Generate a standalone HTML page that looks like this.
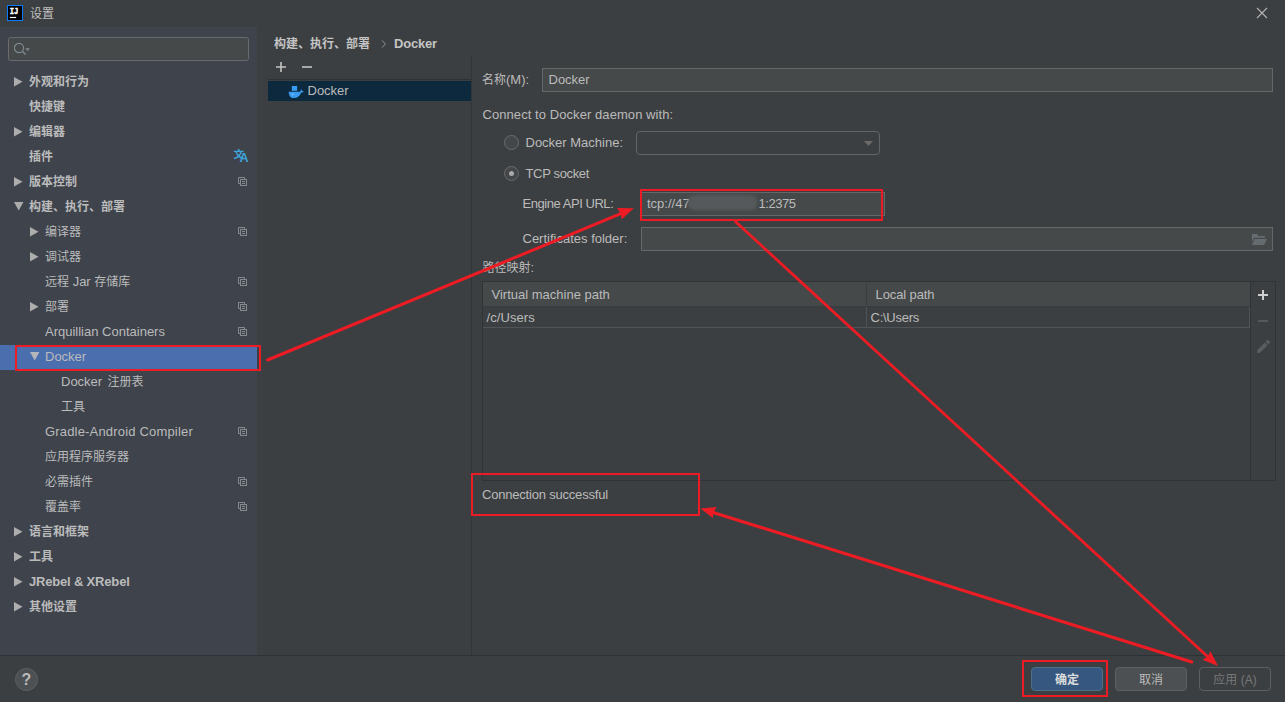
<!DOCTYPE html>
<html lang="zh-CN">
<head>
<meta charset="utf-8">
<title>设置</title>
<style>
html,body{margin:0;padding:0;}
body{width:1285px;height:702px;overflow:hidden;background:#3c3f41;position:relative;
  font-family:"Liberation Sans","Noto Sans CJK SC",sans-serif;font-size:13px;color:#bbbbbb;}
.abs{position:absolute;}
.c{font-size:12px;}
.t{position:absolute;white-space:nowrap;line-height:20px;height:20px;}
#sidebar{left:0;top:27px;width:257px;height:628px;background:#3e434c;}
#footline{left:0;top:655px;width:1285px;height:1px;background:#2f3234;}
.row{position:absolute;left:0;width:257px;height:25px;}
.row.sel{background:#4b6eaf;top:345px !important;}
.row .lbl{position:absolute;top:3px;line-height:20px;white-space:nowrap;}
.row.sel .lbl{top:2px;}
.row.b .lbl{font-weight:bold;}
.arr{position:absolute;fill:#adadad;}
.arr.r{top:7.6px;}
.arr.d{top:7.8px;}
.row.sel .arr.d{top:7.1px;fill:#b2b5ba;}
.cp{position:absolute;left:238px;top:8px;width:10px;height:10px;}
.inp{position:absolute;background:#45494a;border:1px solid #676767;box-sizing:border-box;}
.btn{position:absolute;box-sizing:border-box;height:24px;width:72px;border-radius:4px;text-align:center;line-height:25px;font-size:12px;}
.red{position:absolute;border:2px solid #ed1c24;box-sizing:border-box;}
</style>
</head>
<body>
<!-- title bar -->
<svg class="abs" style="left:7px;top:5px" width="16" height="16" viewBox="0 0 16 16">
  <rect x="0" y="0" width="16" height="16" fill="#087cfa"/>
  <rect x="1" y="1" width="14" height="14" fill="#000"/>
  <rect x="2.9" y="11.9" width="6.2" height="1.2" fill="#fff"/>
  <text x="2.7" y="9" textLength="8.6" lengthAdjust="spacingAndGlyphs" font-family="Liberation Mono, monospace" font-weight="bold" font-size="8.4" fill="#fff" stroke="#fff" stroke-width="0.45">IJ</text>
</svg>
<div class="t c" style="left:30px;top:4px;color:#c0c0c0">设置</div>
<svg class="abs" style="left:1256px;top:7px" width="12" height="12" viewBox="0 0 12 12"><path d="M1 1 L11 11 M11 1 L1 11" stroke="#b4b4b4" stroke-width="1.1" fill="none"/></svg>

<div id="sidebar" class="abs"></div>
<!-- search -->
<div class="inp" style="left:8px;top:37px;width:241px;height:24px;border-color:#696b6c;border-radius:2.5px"></div>
<svg class="abs" style="left:12px;top:41px" width="20" height="16" viewBox="0 0 20 16"><circle cx="7" cy="7" r="4.6" stroke="#7f8b91" stroke-width="1.1" fill="none"/><path d="M10.3 10.3 L13.6 13.6" stroke="#7f8b91" stroke-width="1.4"/><path d="M13.2 7.2 H17.9 L15.55 9.9 Z" fill="#7f8b91"/></svg>

<!-- tree -->
<div class="row b" style="top:69px"><svg class="arr r" style="left:13.8px" width="10" height="10" viewBox="0 0 10 10"><path d="M0 0 L8.5 4.7 L0 9.4 Z"/></svg><span class="lbl" style="left:29px"><span class="c">外观和行为</span></span></div>
<div class="row b" style="top:94px"><span class="lbl" style="left:29px"><span class="c">快捷键</span></span></div>
<div class="row b" style="top:119px"><svg class="arr r" style="left:13.8px" width="10" height="10" viewBox="0 0 10 10"><path d="M0 0 L8.5 4.7 L0 9.4 Z"/></svg><span class="lbl" style="left:29px"><span class="c">编辑器</span></span></div>
<div class="row b" style="top:144px"><span class="lbl" style="left:29px"><span class="c">插件</span></span></div>
<div class="row b" style="top:169px"><svg class="arr r" style="left:13.8px" width="10" height="10" viewBox="0 0 10 10"><path d="M0 0 L8.5 4.7 L0 9.4 Z"/></svg><span class="lbl" style="left:29px"><span class="c">版本控制</span></span><svg class="cp" viewBox="0 0 10 10"><path d="M2.5 6.5 H0.5 V0.5 H6.5 V2.5" fill="none" stroke="#868a8f" stroke-width="1"/><rect x="2.5" y="2.5" width="6" height="6" fill="none" stroke="#868a8f" stroke-width="1"/><rect x="4" y="4" width="3" height="1" fill="#868a8f"/><rect x="4" y="6" width="3" height="1" fill="#868a8f"/></svg></div>
<div class="row b" style="top:194px"><svg class="arr d" style="left:13.8px" width="10" height="10" viewBox="0 0 10 10"><path d="M0 0 H9.4 L4.7 8.5 Z"/></svg><span class="lbl" style="left:29px"><span class="c">构建、执行、部署</span></span></div>
<div class="row" style="top:219px"><svg class="arr r" style="left:29.8px" width="10" height="10" viewBox="0 0 10 10"><path d="M0 0 L8.5 4.7 L0 9.4 Z"/></svg><span class="lbl" style="left:45px"><span class="c">编译器</span></span><svg class="cp" viewBox="0 0 10 10"><path d="M2.5 6.5 H0.5 V0.5 H6.5 V2.5" fill="none" stroke="#868a8f" stroke-width="1"/><rect x="2.5" y="2.5" width="6" height="6" fill="none" stroke="#868a8f" stroke-width="1"/><rect x="4" y="4" width="3" height="1" fill="#868a8f"/><rect x="4" y="6" width="3" height="1" fill="#868a8f"/></svg></div>
<div class="row" style="top:244px"><svg class="arr r" style="left:29.8px" width="10" height="10" viewBox="0 0 10 10"><path d="M0 0 L8.5 4.7 L0 9.4 Z"/></svg><span class="lbl" style="left:45px"><span class="c">调试器</span></span></div>
<div class="row" style="top:269px"><span class="lbl" style="left:45px"><span class="c">远程</span> Jar <span class="c">存储库</span></span><svg class="cp" viewBox="0 0 10 10"><path d="M2.5 6.5 H0.5 V0.5 H6.5 V2.5" fill="none" stroke="#868a8f" stroke-width="1"/><rect x="2.5" y="2.5" width="6" height="6" fill="none" stroke="#868a8f" stroke-width="1"/><rect x="4" y="4" width="3" height="1" fill="#868a8f"/><rect x="4" y="6" width="3" height="1" fill="#868a8f"/></svg></div>
<div class="row" style="top:294px"><svg class="arr r" style="left:29.8px" width="10" height="10" viewBox="0 0 10 10"><path d="M0 0 L8.5 4.7 L0 9.4 Z"/></svg><span class="lbl" style="left:45px"><span class="c">部署</span></span><svg class="cp" viewBox="0 0 10 10"><path d="M2.5 6.5 H0.5 V0.5 H6.5 V2.5" fill="none" stroke="#868a8f" stroke-width="1"/><rect x="2.5" y="2.5" width="6" height="6" fill="none" stroke="#868a8f" stroke-width="1"/><rect x="4" y="4" width="3" height="1" fill="#868a8f"/><rect x="4" y="6" width="3" height="1" fill="#868a8f"/></svg></div>
<div class="row" style="top:319px"><span class="lbl" style="left:45px">Arquillian Containers</span><svg class="cp" viewBox="0 0 10 10"><path d="M2.5 6.5 H0.5 V0.5 H6.5 V2.5" fill="none" stroke="#868a8f" stroke-width="1"/><rect x="2.5" y="2.5" width="6" height="6" fill="none" stroke="#868a8f" stroke-width="1"/><rect x="4" y="4" width="3" height="1" fill="#868a8f"/><rect x="4" y="6" width="3" height="1" fill="#868a8f"/></svg></div>
<div class="row sel" style="top:344px"><svg class="arr d" style="left:30.1px" width="10" height="10" viewBox="0 0 10 10"><path d="M0 0 H9.4 L4.7 8.5 Z"/></svg><span class="lbl" style="left:45px">Docker</span></div>
<div class="row" style="top:369px"><span class="lbl" style="left:61px"><span style="word-spacing:1.8px">Docker <span class="c">注册表</span></span></span></div>
<div class="row" style="top:394px"><span class="lbl" style="left:61px"><span class="c">工具</span></span></div>
<div class="row" style="top:419px"><span class="lbl" style="left:45px"><span style="letter-spacing:0.18px">Gradle-Android Compiler</span></span><svg class="cp" viewBox="0 0 10 10"><path d="M2.5 6.5 H0.5 V0.5 H6.5 V2.5" fill="none" stroke="#868a8f" stroke-width="1"/><rect x="2.5" y="2.5" width="6" height="6" fill="none" stroke="#868a8f" stroke-width="1"/><rect x="4" y="4" width="3" height="1" fill="#868a8f"/><rect x="4" y="6" width="3" height="1" fill="#868a8f"/></svg></div>
<div class="row" style="top:444px"><span class="lbl" style="left:45px"><span class="c">应用程序服务器</span></span></div>
<div class="row" style="top:469px"><span class="lbl" style="left:45px"><span class="c">必需插件</span></span><svg class="cp" viewBox="0 0 10 10"><path d="M2.5 6.5 H0.5 V0.5 H6.5 V2.5" fill="none" stroke="#868a8f" stroke-width="1"/><rect x="2.5" y="2.5" width="6" height="6" fill="none" stroke="#868a8f" stroke-width="1"/><rect x="4" y="4" width="3" height="1" fill="#868a8f"/><rect x="4" y="6" width="3" height="1" fill="#868a8f"/></svg></div>
<div class="row" style="top:494px"><span class="lbl" style="left:45px"><span class="c">覆盖率</span></span><svg class="cp" viewBox="0 0 10 10"><path d="M2.5 6.5 H0.5 V0.5 H6.5 V2.5" fill="none" stroke="#868a8f" stroke-width="1"/><rect x="2.5" y="2.5" width="6" height="6" fill="none" stroke="#868a8f" stroke-width="1"/><rect x="4" y="4" width="3" height="1" fill="#868a8f"/><rect x="4" y="6" width="3" height="1" fill="#868a8f"/></svg></div>
<div class="row b" style="top:519px"><svg class="arr r" style="left:13.8px" width="10" height="10" viewBox="0 0 10 10"><path d="M0 0 L8.5 4.7 L0 9.4 Z"/></svg><span class="lbl" style="left:29px"><span class="c">语言和框架</span></span></div>
<div class="row b" style="top:544px"><svg class="arr r" style="left:13.8px" width="10" height="10" viewBox="0 0 10 10"><path d="M0 0 L8.5 4.7 L0 9.4 Z"/></svg><span class="lbl" style="left:29px"><span class="c">工具</span></span></div>
<div class="row b" style="top:569px"><svg class="arr r" style="left:13.8px" width="10" height="10" viewBox="0 0 10 10"><path d="M0 0 L8.5 4.7 L0 9.4 Z"/></svg><span class="lbl" style="left:29px"><span style="letter-spacing:-0.18px">JRebel &amp; XRebel</span></span></div>
<div class="row b" style="top:594px"><svg class="arr r" style="left:13.8px" width="10" height="10" viewBox="0 0 10 10"><path d="M0 0 L8.5 4.7 L0 9.4 Z"/></svg><span class="lbl" style="left:29px"><span class="c">其他设置</span></span></div>

<!-- translate icon -->
<svg class="abs" style="left:233px;top:148px" width="16" height="16" viewBox="0 0 16 16"><text x="0.6" y="10.2" font-size="10.5" font-weight="bold" fill="#3ea6dc" font-family="Noto Sans CJK SC, sans-serif">文</text><text x="6.4" y="14.2" font-size="12.5" font-weight="bold" fill="#3ea6dc" font-family="Liberation Sans, sans-serif">A</text></svg>

<!-- breadcrumb -->
<div class="t c" style="left:274px;top:34px;font-weight:bold;color:#c4c4c4">构建、执行、部署</div>
<svg class="abs" style="left:380px;top:39px" width="8" height="10" viewBox="0 0 8 10"><path d="M2 1.4 L5.4 5 L2 8.6" stroke="#8e9193" stroke-width="1" fill="none"/></svg>
<div class="t" style="left:394px;top:34px;font-weight:bold;color:#c4c4c4;letter-spacing:-0.2px">Docker</div>

<!-- list panel -->
<svg class="abs" style="left:276px;top:62px" width="40" height="10" viewBox="0 0 40 10"><path d="M0 5 H10 M5 0 V10" stroke="#c4c4c4" stroke-width="1.6" fill="none"/><path d="M26 5 H36" stroke="#c4c4c4" stroke-width="1.6"/></svg>
<div class="abs" style="left:268px;top:79px;width:203px;height:1px;background:#2f3133"></div>
<div class="abs" style="left:268px;top:81px;width:203px;height:20px;background:#0d293e"></div>
<svg class="abs" style="left:288px;top:85px" width="16" height="14" viewBox="0 0 16 14"><rect x="3.8" y="1" width="5.3" height="4.8" fill="#3a9cf0"/><path d="M0.7 6.7 H12.3 C12.9 5.6 12.8 4.8 12.4 4 C13.6 4.6 14 5.4 14.1 6 C14.8 5.9 15.3 6.1 15.6 6.4 C15.1 7.3 14.2 7.6 13.1 7.6 C12 11.2 9.4 13.1 6 13.1 C2.6 13.1 0.7 10.6 0.7 6.7 Z" fill="#3a9cf0"/><circle cx="4.6" cy="9.4" r="0.9" fill="#7cc0f5"/></svg>
<div class="t" style="left:307.5px;top:81px">Docker</div>
<div class="abs" style="left:471px;top:55px;width:1px;height:600px;background:#323537"></div>

<!-- form -->
<div class="t" style="left:482px;top:70px"><span class="c">名称</span>(M):</div>
<div class="inp" style="left:542px;top:68px;width:731px;height:24px"></div>
<div class="t" style="left:548.5px;top:70px">Docker</div>
<div class="t" style="left:482.5px;top:105px;letter-spacing:0.07px">Connect to Docker daemon with:</div>

<div class="abs" style="left:504px;top:135px;width:15px;height:15px;border-radius:50%;box-sizing:border-box;border:1px solid #6b6b6b;background:#43474a"></div>
<div class="t" style="left:525.5px;top:133px">Docker Machine:</div>
<div class="abs" style="left:636px;top:131px;width:244px;height:24px;border:1px solid #646464;border-radius:4px;box-sizing:border-box;background:#3c3f41"></div>
<svg class="abs" style="left:864px;top:141px" width="9" height="5" viewBox="0 0 9 5"><path d="M0 0 H9 L4.5 5 Z" fill="#6a6a6a"/></svg>

<div class="abs" style="left:504px;top:166px;width:15px;height:15px;border-radius:50%;box-sizing:border-box;border:1px solid #6b6b6b;background:#43474a"></div>
<div class="abs" style="left:509px;top:171px;width:5px;height:5px;border-radius:50%;background:#a9a9a9"></div>
<div class="t" style="left:525.5px;top:164px;letter-spacing:-0.35px">TCP socket</div>

<div class="t" style="left:522.5px;top:194px;letter-spacing:-0.45px">Engine API URL:</div>
<div class="inp" style="left:641px;top:192px;width:244px;height:24px"></div>
<div class="t" style="left:647px;top:194px">tcp://47</div><div class="t" style="left:758.5px;top:194px;letter-spacing:-0.45px">1:2375</div>
<div class="abs" style="left:688px;top:195px;width:69px;height:15px;border-radius:6px;background:#55595b;filter:blur(1.4px)"></div>

<div class="t" style="left:522.5px;top:229px">Certificates folder:</div>
<div class="inp" style="left:641px;top:227px;width:632px;height:24px"></div>
<svg class="abs" style="left:1252px;top:234px" width="16" height="12" viewBox="0 0 16 12"><path d="M0 0 H5 L6.5 1.9 H13 V3.8 H2 L0 8 Z" fill="#656c70"/><path d="M2.6 5 H15 L12.1 10.9 H-0.1 Z" fill="#656c70"/></svg>

<div class="t c" style="left:482.5px;top:258px">路径映射<span style="font-size:13px">:</span></div>
<!-- table -->
<div class="abs" style="left:482px;top:281px;width:794px;height:200px;border:1px solid #313335;box-sizing:border-box"></div>
<div class="abs" style="left:483px;top:282px;width:767px;height:24px;background:#45494a"></div>
<div class="abs" style="left:1250px;top:282px;width:1px;height:198px;background:#313335"></div>
<div class="abs" style="left:483px;top:306px;width:767px;height:1px;background:#393c3e"></div>
<div class="abs" style="left:483px;top:327px;width:767px;height:1px;background:#505456"></div>
<div class="abs" style="left:866px;top:284px;width:1px;height:21px;background:#3a3d3f"></div><div class="abs" style="left:866px;top:307px;width:1px;height:20px;background:#4f5355"></div>
<div class="abs" style="left:1249px;top:307px;width:1px;height:21px;background:#505456"></div>
<div class="t" style="left:491.5px;top:285px">Virtual machine path</div>
<div class="t" style="left:875.5px;top:285px;letter-spacing:-0.1px">Local path</div>
<div class="t" style="left:486.5px;top:308px;letter-spacing:0.08px">/c/Users</div>
<div class="t" style="left:870.5px;top:308px;letter-spacing:-0.25px">C:\Users</div>
<svg class="abs" style="left:1257px;top:289px" width="12" height="12" viewBox="0 0 12 12"><path d="M1 6 H11 M6 1 V11" stroke="#cfcfcf" stroke-width="2" fill="none"/></svg>
<svg class="abs" style="left:1257px;top:315px" width="12" height="12" viewBox="0 0 12 12"><path d="M1 6 H11" stroke="#5a5d5f" stroke-width="1.8" fill="none"/></svg>
<svg class="abs" style="left:1256px;top:339px" width="15" height="15" viewBox="0 0 15 15"><path d="M1 14 L1.2 11 L8.8 3.4 L11.6 6.2 L4 13.8 Z M9.6 2.6 L11 1.2 Q11.6 0.6 12.2 1.2 L13.8 2.8 Q14.4 3.4 13.8 4 L12.4 5.4 Z" fill="#5a5d5f"/></svg>

<div class="t" style="left:482px;top:485px;letter-spacing:-0.2px">Connection successful</div>

<!-- footer -->
<div id="footline" class="abs"></div>
<div class="abs" style="left:15px;top:668px;width:23px;height:23px;border-radius:50%;box-sizing:border-box;border:1px solid #5e6163;background:#4c5052;text-align:center;line-height:21px;font-weight:bold;color:#b9b9b9;font-size:16px">?</div>
<div class="btn" style="left:1031px;top:667px;background:#365880;border:1px solid #4c708c;color:#dcdcdc;font-weight:bold">确定</div>
<div class="btn" style="left:1115px;top:667px;background:#4c5052;border:1px solid #5e6060;color:#bbbbbb">取消</div>
<div class="btn" style="left:1199px;top:667px;background:#3c3f41;border:1px solid #5e6060;color:#777777">应用 (A)</div>

<!-- red annotations -->
<div class="red" style="left:15px;top:345px;width:246px;height:26px"></div>
<div class="red" style="left:640px;top:189px;width:243px;height:32px"></div>
<div class="red" style="left:471px;top:473px;width:229px;height:43px"></div>
<div class="red" style="left:1022px;top:660px;width:86px;height:37px"></div>
<svg class="abs" style="left:0;top:0" width="1285" height="702" viewBox="0 0 1285 702">
  <g stroke="#ed1c24" stroke-width="2.8" fill="none" stroke-linecap="round">
    <path d="M267.6 360 L622 213.2" stroke-width="3"/>
    <path d="M1191.8 662 L710 511.5" stroke-width="3.1"/>
  </g>
  <g stroke="#ed1c24" stroke-width="2.8" fill="none" stroke-linecap="butt">
    <path d="M734.8 221 L1208 657"/>
  </g>
  <g fill="#ed1c24">
    <path d="M633.8 208.2 L617.2 208 L620.5 213.6 L621.8 219.3 Z"/>
    <path d="M1218 665.9 L1210.5 651.3 L1207.8 656.6 L1202.6 659.7 Z"/>
    <path d="M700.5 508.4 L716.6 507 L713.5 512.4 L712.8 517.9 Z"/>
  </g>
</svg>
</body>
</html>
